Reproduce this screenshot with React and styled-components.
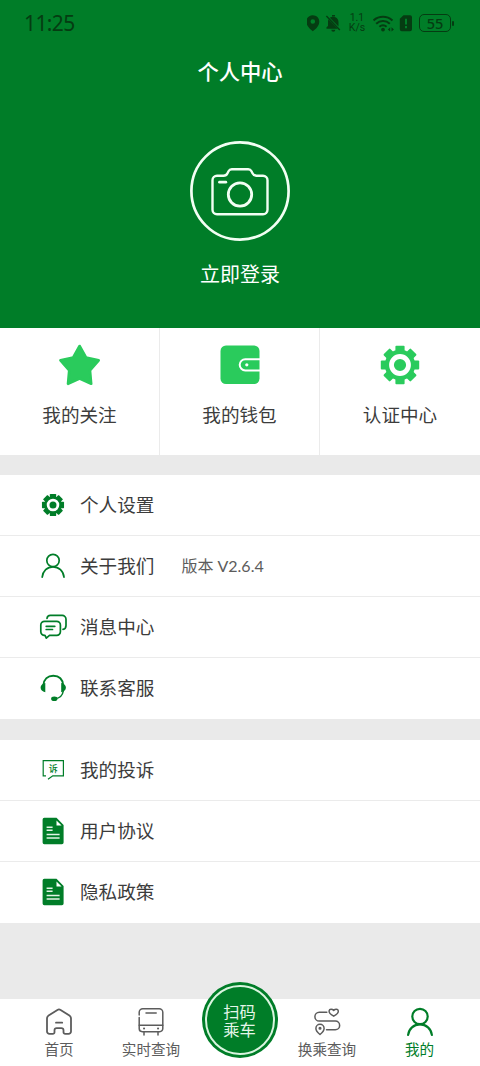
import styled, { createGlobalStyle } from "styled-components";

const GlobalStyle = createGlobalStyle`
  * {
    box-sizing: border-box;
  }
  body {
    margin: 0;
    background: #eaeaea;
    font-family: "Noto Sans CJK SC", "Noto Sans", sans-serif;
    color: #3c3c3c;
  }
  svg {
    display: block;
    flex: none;
  }
`;

const green = "#007d28";
const bright = "#2acb5c";
const dark = "#053c12";

const Page = styled.div`
  display: flex;
  flex-direction: column;
  width: 480px;
  height: 1066px;
  overflow: hidden;
  background: #eaeaea;
`;

const Header = styled.header`
  display: flex;
  flex-direction: column;
  align-items: center;
  height: 328px;
  flex: none;
  background: ${green};
  color: #fff;
`;

const StatusBar = styled.div`
  display: flex;
  justify-content: space-between;
  align-items: center;
  width: 100%;
  height: 46px;
  padding: 0 26px 0 24px;
  color: ${dark};
`;

const Clock = styled.span`
  font-family: "Noto Sans", sans-serif;
  font-size: 21px;
  line-height: 28px;
  letter-spacing: -0.6px;
`;

const StatusIcons = styled.div`
  display: flex;
  align-items: center;
`;

const Speed = styled.div`
  display: flex;
  flex-direction: column;
  align-items: center;
  width: 18px;
  margin: 0 7px 0 5px;
  font-family: Roboto, sans-serif;
  font-size: 10.5px;
  line-height: 10.5px;
  white-space: nowrap;
`;

const Battery = styled.div`
  display: flex;
  align-items: center;
  justify-content: center;
  width: 32px;
  height: 18px;
  margin-left: 6px;
  border: 1.5px solid ${dark};
  border-radius: 5px;
  font-family: "Noto Sans", sans-serif;
  font-size: 14.5px;
  font-weight: 500;
  line-height: 14px;
`;

const BatteryTip = styled.span`
  width: 2px;
  height: 5px;
  margin-left: 1px;
  border-radius: 1px;
  background: ${dark};
`;

const Title = styled.h1`
  margin: 9px 0 0;
  font-size: 21.3px;
  font-weight: 500;
  line-height: 32px;
`;

const Avatar = styled.button`
  display: block;
  margin: 53.5px 0 0;
  padding: 0;
  border: 0;
  background: none;
`;

const LoginText = styled.span`
  margin-top: 18.5px;
  font-size: 20px;
  line-height: 30px;
`;

const Shortcuts = styled.div`
  display: grid;
  grid-template-columns: 160px 160px 160px;
  height: 126.5px;
  flex: none;
  background: #fff;
`;

const Shortcut = styled.div`
  display: flex;
  flex-direction: column;
  align-items: center;
  padding-top: 15.5px;
  font-size: 18.6px;
  line-height: 28px;
  border-right: ${(p) => (p.$last ? "0" : "1px solid #ebebeb")};

  span {
    margin-top: 14.5px;
  }
`;

const Section = styled.section`
  flex: none;
  margin-top: ${(p) => p.$gap}px;
  background: #fff;
`;

const Row = styled.div`
  display: flex;
  align-items: center;
  height: ${(p) => p.$height}px;
  padding: 0 0 0 38px;
  border-bottom: 1px solid ${(p) => (p.$last ? "#fff" : "#ebebeb")};
  font-size: 18.6px;
  line-height: 28px;

  svg {
    margin-right: 12px;
  }
`;

const Label = styled.span`
  padding-bottom: 2px;
`;

const Version = styled.span`
  margin-left: 27px;
  font-family: Lato, "Noto Sans CJK SC", sans-serif;
  font-size: 16px;
  color: #5c5c5c;
`;

const TabBar = styled.nav`
  display: grid;
  grid-template-columns: 118px 66px 111px 64px 121px;
  height: 67px;
  margin-top: auto;
  flex: none;
  background: #fff;
`;

const Tab = styled.div`
  display: flex;
  flex-direction: column;
  align-items: center;
  padding-top: 7px;
  font-size: 14.6px;
  line-height: 20px;
  white-space: nowrap;
  color: ${(p) => (p.$active ? green : "#5c5c5c")};

  span {
    margin-top: 1px;
  }
`;

const ScanSlot = styled.div`
  display: flex;
  justify-content: center;
`;

const ScanButton = styled.div`
  display: flex;
  align-items: center;
  justify-content: center;
  width: 76px;
  height: 76px;
  flex: none;
  margin-top: -17px;
  border-radius: 50%;
  background: ${green};
`;

const ScanRing = styled.div`
  display: flex;
  flex-direction: column;
  align-items: center;
  justify-content: center;
  width: 70px;
  height: 70px;
  border: 2px solid #d9f5df;
  border-radius: 50%;
  color: #e4f5e8;
  font-size: 16.3px;
  line-height: 18px;
`;

const GearIcon = ({ size, color, box, tooth = 9.2 }) => {
  const half = 20 * (box / size);
  return (
    <svg width={box} height={box} viewBox={`${-half} ${-half} ${half * 2} ${half * 2}`} fill={color}>
      {[0, 45, 90, 135].map((a) => (
        <rect key={a} x={-tooth / 2} y="-19.2" width={tooth} height="38.4" rx="1" transform={`rotate(${a})`} />
      ))}
      <circle r="15.2" />
      <circle r="8.5" fill="none" stroke="#fff" strokeWidth="4.8" />
    </svg>
  );
};

const StarIcon = () => (
  <svg width="42" height="42" viewBox="0 0 42 42" fill={bright} stroke={bright} strokeWidth="2.6" strokeLinejoin="round">
    <path d="M20.600 2 27 13.500 39.700 16.300 31 26.300 32.200 39.800 20.600 34.500 9 39.800 10.200 26.300 1.500 16.300 14.200 13.500Z" />
  </svg>
);

const WalletIcon = () => (
  <svg width="42" height="42" viewBox="0 0 42 42">
    <rect x="1.5" y="1.5" width="39" height="38.5" rx="5.5" fill={bright} />
    <path d="M41 15.2H26.3a5.6 5.6 0 0 0 0 11.2H41" fill="none" stroke="#fff" strokeWidth="2" />
    <circle cx="27.800" cy="20.800" r="1.600" fill="#fff" />
  </svg>
);

const CameraIcon = () => (
  <svg width="100" height="100" viewBox="0 0 100 100" fill="none" stroke="#f2fff4" strokeWidth="2.4" strokeLinejoin="round" strokeLinecap="round">
    <circle cx="50" cy="50" r="48.600" strokeWidth="2.700" />
    <path d="M27 34.7h6.500c2.100 0 3.200-.8 4-2.500l1-1.900c.8-1.500 1.700-2 3.300-2h16.400c1.600 0 2.500.5 3.300 2l1 1.900c.8 1.700 1.900 2.500 4 2.500H73a4.500 4.500 0 0 1 4.500 4.500v29.600a4.500 4.500 0 0 1-4.500 4.500H27a4.500 4.500 0 0 1-4.500-4.500V39.200a4.500 4.500 0 0 1 4.500-4.500Z" />
    <circle cx="50" cy="53.500" r="11.700" strokeWidth="2.800" />
    <path d="M29.500 41.200h6.300" strokeWidth="2.800" />
  </svg>
);

const UserIcon = () => (
  <svg width="30" height="30" viewBox="0 0 30 30" fill="none" stroke={green} strokeWidth="1.7" strokeLinecap="round">
    <circle cx="15" cy="9.5" r="6.2" />
    <path d="M4.200 26.200C4.800 20 9.200 15.800 15 15.800S25.400 20 26 26.200" />
  </svg>
);

const MineIcon = () => (
  <svg width="30" height="32" viewBox="0 0 30 32" fill="none" stroke={green} strokeWidth="2.2" strokeLinecap="round">
    <circle cx="15" cy="10.500" r="7.700" />
    <path d="M3.100 29C3.800 22.600 8.800 18.400 15 18.400S26.200 22.600 26.900 29" />
  </svg>
);

const MessageIcon = () => (
  <svg width="30" height="30" viewBox="0 0 30 30" fill="none" stroke={green} strokeWidth="1.7" strokeLinecap="round" strokeLinejoin="round">
    <path d="M9 6.400C9.300 4.300 10.500 3.400 12.300 3.400H24.200a3.800 3.800 0 0 1 3.800 3.800v6.300c0 2.200-1.100 3.500-3 3.900" />
    <path d="M6.500 9.300H18.700a3.700 3.700 0 0 1 3.700 3.700v6.700a3.700 3.700 0 0 1-3.700 3.700H11.500l-3.200 2.700-1.300-2.700h-.5a3.700 3.700 0 0 1-3.700-3.700V13a3.700 3.700 0 0 1 3.700-3.700Z" />
    <path d="M8.200 14.300h8.600M8.200 17.500h6.300" />
  </svg>
);

const HeadsetIcon = () => (
  <svg width="30" height="30" viewBox="0 0 30 30" fill={green}>
    <path d="M5.300 12.500C5.800 6.200 9.800 2.800 15.300 2.800S24.700 6.200 25.200 12.500" fill="none" stroke={green} strokeWidth="1.900" />
    <path d="M7.300 9.900v9.300C4.300 18.700 2.600 17 2.600 14.600S4.300 10.400 7.300 9.900ZM23.200 9.900v9.300c3-.5 4.700-2.200 4.700-4.600s-1.700-4.200-4.700-4.700Z" />
    <path d="M25.300 18c-.7 4.200-3.600 7.300-8.300 7.600" fill="none" stroke={green} strokeWidth="1.500" />
    <ellipse cx="16.300" cy="25.800" rx="3.200" ry="2.300" />
  </svg>
);

const ComplaintIcon = () => (
  <svg width="30" height="30" viewBox="0 0 30 30" fill="none" stroke={green} strokeWidth="1.200">
    <path d="M8 20.800H5.200V5.600H25.400V20.800H14.800L10 24.300" />
    <text x="15.200" y="16.600" textAnchor="middle" fontSize="9" fontWeight="500" fill={green} stroke="none">
      诉
    </text>
  </svg>
);

const FileIcon = () => (
  <svg width="30" height="30" viewBox="0 0 30 30">
    <path d="M6.300 1.800H18.500L25.600 9V26.500a1.700 1.700 0 0 1-1.700 1.700H6.300a1.700 1.700 0 0 1-1.700-1.700V3.500a1.700 1.700 0 0 1 1.700-1.700Z" fill={green} />
    <path d="M18.500 4.400V9.500H23.600Z" fill="#fff" />
    <path d="M8.600 11.300h6M8.600 14.300h6M8.600 18.400h13M8.600 22.100h13" stroke="#e2f4e5" strokeWidth="1.500" />
  </svg>
);

const HomeIcon = () => (
  <svg width="30" height="32" viewBox="0 0 30 32" fill="none" stroke="#5c5c5c" strokeWidth="1.800" strokeLinejoin="round" strokeLinecap="round">
    <path d="M13.400 3.900 4.600 9.600C3.400 10.400 3 11.200 3 12.500V25.500A2.400 2.400 0 0 0 5.400 27.900H8.800a1.700 1.700 0 0 0 1.700-1.700V24.300a2.200 2.200 0 0 1 2.200-2.200h4.600a2.200 2.200 0 0 1 2.200 2.200v1.900a1.700 1.700 0 0 0 1.700 1.700H24.600a2.400 2.400 0 0 0 2.400-2.400V12.500c0-1.300-.4-2.100-1.600-2.900L16.600 3.900a3 3 0 0 0-3.200 0Z" />
    <path d="M12 16.700h6.200" />
  </svg>
);

const BusIcon = () => (
  <svg width="30" height="32" viewBox="0 0 30 32" fill="none" stroke="#5c5c5c" strokeWidth="1.500" strokeLinecap="round">
    <path d="M3.200 9V6.300A3.600 3.600 0 0 1 6.800 2.700H23.200a3.600 3.600 0 0 1 3.600 3.600V22.600a3.100 3.100 0 0 1-3.100 3.100H6.300a3.100 3.100 0 0 1-3.100-3.100V11.500" />
    <path d="M3.200 19.300H26.800M10 6.900h10.200M8 26v3M22 26v3" />
    <path d="M8 22.500h.1M22 22.500h.1" strokeWidth="2" />
  </svg>
);

const RouteIcon = () => (
  <svg width="30" height="32" viewBox="0 0 30 32" fill="none" stroke="#5c5c5c" strokeWidth="1.500" strokeLinecap="round" strokeLinejoin="round">
    <path d="M14.800 6.300H7.300a4.400 4.400 0 0 0 0 8.800H23.300a4.300 4.300 0 0 1 0 8.700H14.500" />
    <path d="M21.700 10.200C18.200 8.200 16.800 6.500 17.100 4.800c.4-2 3.100-2.100 4.600-.4 1.500-1.700 4.200-1.600 4.600.4.300 1.700-1.100 3.400-4.600 5.400Z" />
    <path d="M8 28.500C5.300 26.200 3.900 24.400 3.900 22.400a4.100 4.100 0 0 1 8.200 0c0 2-1.400 3.800-4.100 6.100Z" />
    <circle cx="8" cy="22.300" r=".8" />
  </svg>
);

const StatusGlyphs = () => (
  <svg width="36" height="20" viewBox="0 0 36 20" fill={dark}>
    <path d="M5.800 2.200c-3.700 0-6.500 2.800-6.500 6.300 0 4.100 3.100 7.300 6.500 9.800 3.400-2.500 6.500-5.700 6.500-9.800 0-3.500-2.800-6.300-6.500-6.300Zm0 4a2.300 2.300 0 1 1 0 4.600 2.300 2.300 0 0 1 0-4.600Z" fillRule="evenodd" />
    <path d="M22.800 4.800A5.500 5.500 0 0 1 31.500 9.200v4.300ZM21.400 6.300 30.700 15.700H19.500v-1.400l1.500-1.400V8.700c0-.9.100-1.700.4-2.400ZM24.300 16.700h4a2 2 0 0 1-4 0Z" />
    <path d="M19.400 2.900 32.800 17" stroke={dark} strokeWidth="1.400" />
    <path d="M25 2.800h3" stroke={dark} strokeWidth="1.500" />
  </svg>
);

const WifiSim = () => (
  <svg width="40" height="20" viewBox="0 0 40 20" fill="none" stroke={dark} strokeWidth="2">
    <path d="M.5 7.400a14.300 14.300 0 0 1 19 0M3.200 10.700a9.800 9.800 0 0 1 13.600 0M6.400 13.700a5.500 5.500 0 0 1 7.200 0" />
    <circle cx="10" cy="16.600" r="1.900" fill={dark} stroke="none" />
    <path d="M17.200 14.300v4.200l-2.400-2.100ZM18.500 14.300v4.200l2.400-2.100Z" fill={dark} stroke="none" />
    <path d="M30.500 2.200h6.500a2 2 0 0 1 2 2v12a2 2 0 0 1-2 2H28.800a2 2 0 0 1-2-2V5.700Z" fill={dark} stroke="none" />
    <path d="M33 5.800v5.700M33 13v2.200" stroke={green} />
  </svg>
);

const settings = [
  { label: "个人设置", icon: <GearIcon size={23} box={30} color={green} tooth={11} /> },
  { label: "关于我们", icon: <UserIcon />, note: "版本 V2.6.4" },
  { label: "消息中心", icon: <MessageIcon /> },
  { label: "联系客服", icon: <HeadsetIcon /> },
];

const documents = [
  { label: "我的投诉", icon: <ComplaintIcon /> },
  { label: "用户协议", icon: <FileIcon /> },
  { label: "隐私政策", icon: <FileIcon /> },
];

const Menu = ({ items, gap, rowHeight }) => (
  <Section $gap={gap}>
    {items.map((item, i) => (
      <Row key={item.label} $height={rowHeight} $last={i === items.length - 1}>
        {item.icon}
        <Label>{item.label}</Label>
        {item.note ? <Version>{item.note}</Version> : null}
      </Row>
    ))}
  </Section>
);

const App = () => {
  return (
    <>
      <GlobalStyle />
      <Page>
        <Header>
          <StatusBar>
            <Clock>11:25</Clock>
            <StatusIcons>
              <StatusGlyphs />
              <Speed>
                <span>1.1</span>
                <span>K/s</span>
              </Speed>
              <WifiSim />
              <Battery>55</Battery>
              <BatteryTip />
            </StatusIcons>
          </StatusBar>
          <Title>个人中心</Title>
          <Avatar aria-label="登录">
            <CameraIcon />
          </Avatar>
          <LoginText>立即登录</LoginText>
        </Header>
        <Shortcuts>
          <Shortcut>
            <StarIcon />
            <span>我的关注</span>
          </Shortcut>
          <Shortcut>
            <WalletIcon />
            <span>我的钱包</span>
          </Shortcut>
          <Shortcut $last>
            <GearIcon size={40} box={42} color={bright} />
            <span>认证中心</span>
          </Shortcut>
        </Shortcuts>
        <Menu items={settings} gap={20} rowHeight={61.1} />
        <Menu items={documents} gap={21} rowHeight={61} />
        <TabBar>
          <Tab>
            <HomeIcon />
            <span>首页</span>
          </Tab>
          <Tab>
            <BusIcon />
            <span>实时查询</span>
          </Tab>
          <ScanSlot>
            <ScanButton>
              <ScanRing>
                <span>扫码</span>
                <span>乘车</span>
              </ScanRing>
            </ScanButton>
          </ScanSlot>
          <Tab>
            <RouteIcon />
            <span>换乘查询</span>
          </Tab>
          <Tab $active>
            <MineIcon />
            <span>我的</span>
          </Tab>
        </TabBar>
      </Page>
    </>
  );
};
export default App;
